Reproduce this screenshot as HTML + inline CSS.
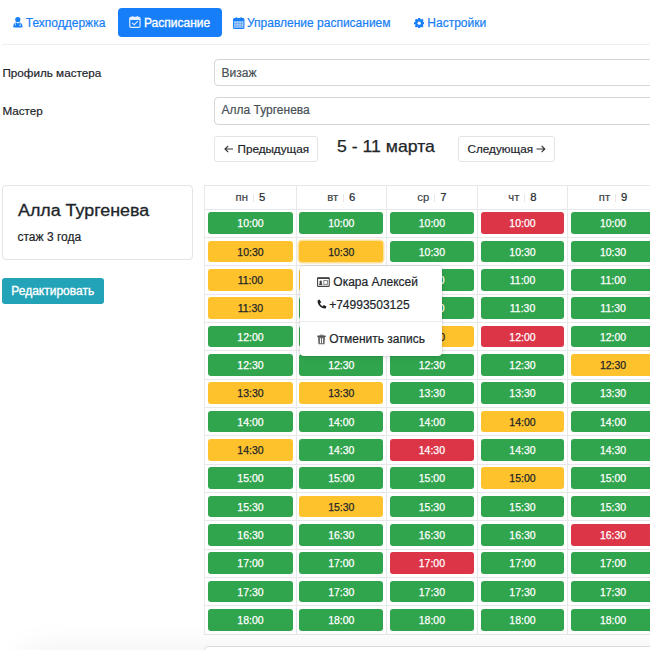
<!DOCTYPE html>
<html><head><meta charset="utf-8">
<style>
html,body{margin:0;padding:0;background:#fff;}
body{-webkit-text-stroke:0.2px currentColor;width:650px;height:650px;overflow:hidden;position:relative;font-family:"Liberation Sans",sans-serif;color:#212529;}
.a{position:absolute;white-space:nowrap;}
.t12{font-size:12px;line-height:14px;}
.nav{color:#167ef8;font-size:12px;line-height:14px;}
.pill{position:absolute;left:118px;top:8px;width:104px;height:28.5px;background:#167ef8;border-radius:4px;}
.hr{position:absolute;left:2px;top:44px;width:648px;height:1px;background:#eceeef;}
.inp{position:absolute;left:214px;width:460px;height:25px;border:1px solid #d3d7db;border-radius:4px;box-sizing:border-box;}
.btn{position:absolute;border:1px solid #e3e4e6;border-radius:3px;box-sizing:border-box;background:#fff;}
.card{position:absolute;left:2px;top:185px;width:191px;height:75px;border:1px solid #e3e3e3;border-radius:4px;box-sizing:border-box;}
.edit{position:absolute;left:2px;top:278px;width:101.6px;height:25.5px;background:#22a3b7;border-radius:3px;}
.vl{position:absolute;width:1px;background:#e6e8ea;}
.hl{position:absolute;height:1px;width:460px;background:#e6e8ea;}
.hd{position:absolute;display:flex;align-items:center;justify-content:center;}
.dw{font-size:11.3px;color:#3d4246;}
.sep{display:inline-block;width:1px;height:8px;background:#e6e8ea;margin:1px 5px 0 5px;}
.dn{font-size:11.3px;color:#212529;}
.slot{position:absolute;height:21.5px;border-radius:3px;font-size:10.5px;line-height:23.5px;text-align:center;color:#fff;-webkit-text-stroke:0.25px currentColor;}
.sg{background:#31a54d;}
.sy{background:#fec22d;color:#212529;}
.sr{background:#dc3548;}
.foc{box-shadow:0 0 0 1.5px #fde2a0;}
.pop{position:absolute;left:299.8px;top:265.8px;width:142.4px;height:90.2px;background:#fff;border-radius:4px;box-shadow:0 0 0 1px rgba(0,0,0,.06),0 2px 6px rgba(0,0,0,.10);}
.popline{position:absolute;left:0;top:55px;width:142px;height:1px;background:#ececec;}
.shade{position:absolute;left:25px;top:662px;width:800px;height:60px;border-radius:20px;background:#000;box-shadow:0 0 40px 6px rgba(0,0,0,.09);}
.bbox{position:absolute;left:204px;top:646px;width:460px;height:30px;border:1px solid #dcdcdc;border-radius:4px;box-sizing:border-box;background:#fff;}
</style></head><body>
<!-- nav -->
<svg class="a" style="left:13px;top:16.2px" width="11" height="12" viewBox="0 0 11 12"><circle cx="4.8" cy="3.5" r="2.6" fill="#167ef8"/><path d="M0.2 11.3 C0.2 8.2 1.6 6.6 3.2 6.3 L4.9 7.6 L6.6 6.3 C8.2 6.6 9.6 8.2 9.6 11.3 Q4.9 11.9 0.2 11.3Z" fill="#167ef8"/><path d="M2.4 6.6 V9.6 M7.2 6.6 V8.6" stroke="#cfe3fd" stroke-width="0.8" fill="none"/><circle cx="7.2" cy="9.4" r="0.8" fill="#cfe3fd"/></svg>
<div class="a nav" style="left:25.8px;top:16.2px">Техподдержка</div>
<div class="pill"></div>
<svg class="a" style="left:129px;top:16.1px" width="12" height="12" viewBox="0 0 12 12"><rect x="0.75" y="1.4" width="10.3" height="10" rx="1.3" fill="none" stroke="#e3eeff" stroke-width="1.2"/><rect x="0.75" y="1.4" width="10.3" height="2.6" rx="1" fill="#e3eeff"/><rect x="2.5" y="0.2" width="2" height="2.6" rx="0.9" fill="#e3eeff"/><rect x="7.3" y="0.2" width="2" height="2.6" rx="0.9" fill="#e3eeff"/><path d="M3.1 6.9 L5.2 8.8 L8.8 5.2" fill="none" stroke="#e3eeff" stroke-width="1.15"/></svg>
<div class="a nav" style="left:144px;top:16.2px;color:#fff;-webkit-text-stroke:0.35px #fff">Расписание</div>
<svg class="a" style="left:233px;top:16.5px" width="12" height="12" viewBox="0 0 12 12"><rect x="0.6" y="4" width="10.3" height="7.4" fill="#b9d7fc"/><rect x="0.6" y="1.5" width="10.3" height="9.9" rx="1" fill="none" stroke="#167ef8" stroke-width="1.1"/><rect x="0.6" y="1.5" width="10.3" height="2.7" rx="0.8" fill="#167ef8"/><rect x="2.4" y="0.2" width="1.9" height="2.5" rx="0.8" fill="#167ef8"/><rect x="7.2" y="0.2" width="1.9" height="2.5" rx="0.8" fill="#167ef8"/><path d="M3.1 4 V11.3 M5.75 4 V11.3 M8.3 4 V11.3 M0.6 6.6 H10.9 M0.6 9 H10.9" stroke="#5a9ff5" stroke-width="0.7"/></svg>
<div class="a nav" style="left:247px;top:16.2px">Управление расписанием</div>
<svg class="a" style="left:414px;top:17.5px" width="10.4" height="10.4" viewBox="0 0 10 10"><g fill="#167ef8"><circle cx="5" cy="5" r="3.7"/><path d="M4 0 H6 L6.3 2 H3.7Z M4 10 H6 L6.3 8 H3.7Z M0 4 V6 L2 6.3 V3.7Z M10 4 V6 L8 6.3 V3.7Z"/><path d="M4 0 H6 L6.3 2 H3.7Z M4 10 H6 L6.3 8 H3.7Z M0 4 V6 L2 6.3 V3.7Z M10 4 V6 L8 6.3 V3.7Z" transform="rotate(45 5 5)"/></g><circle cx="5" cy="5" r="1.6" fill="#fff"/></svg>
<div class="a nav" style="left:427.3px;top:16.2px">Настройки</div>
<div class="hr"></div>

<!-- form -->
<div class="a t12" style="left:2.4px;top:66.1px;font-size:11.7px">Профиль мастера</div>
<div class="a t12" style="left:2.4px;top:103.6px;font-size:11.7px">Мастер</div>
<div class="inp" style="top:59px;height:27px"></div>
<div class="a t12" style="left:221.5px;top:65.6px;color:#495057">Визаж</div>
<div class="inp" style="top:97px;height:28px"></div>
<div class="a t12" style="left:221.5px;top:103.3px;color:#495057">Алла Тургенева</div>

<div class="btn" style="left:214px;top:136px;width:104px;height:26px"></div>
<svg class="a" style="left:224px;top:145px" width="10" height="8" viewBox="0 0 10 8"><path d="M9 4 H1.2 M4.2 0.9 L1 4 L4.2 7.1" fill="none" stroke="#333" stroke-width="1.15"/></svg>
<div class="a t12" style="left:237.5px;top:141.8px;font-size:11.7px">Предыдущая</div>
<div class="a" style="left:337.3px;top:136px;font-size:16.5px;line-height:20px;-webkit-text-stroke:0.25px currentColor;transform:scaleX(1.07);transform-origin:0 0">5 - 11 марта</div>
<div class="btn" style="left:458px;top:136px;width:97px;height:26px"></div>
<div class="a t12" style="left:467.6px;top:141.8px;font-size:11.7px">Следующая</div>
<svg class="a" style="left:536px;top:145px" width="10" height="8" viewBox="0 0 10 8"><path d="M0.5 4 H8.6 M5.6 0.9 L8.8 4 L5.6 7.1" fill="none" stroke="#333" stroke-width="1.15"/></svg>

<!-- card -->
<div class="card"></div>
<div class="a" style="left:17.6px;top:200.5px;font-size:16px;line-height:20px;-webkit-text-stroke:0.3px currentColor;transform:scaleX(1.115);transform-origin:0 0">Алла Тургенева</div>
<div class="a t12" style="left:17.5px;top:229.5px">стаж 3 года</div>
<div class="edit"></div>
<div class="a t12" style="left:11.3px;top:283.5px;color:#fff;-webkit-text-stroke:0.35px #fff">Редактировать</div>

<!-- table -->
<div class="vl" style="left:204.40px;top:185.00px;height:449.69px"></div>
<div class="vl" style="left:295.50px;top:185.00px;height:449.69px"></div>
<div class="vl" style="left:386.10px;top:185.00px;height:449.69px"></div>
<div class="vl" style="left:476.70px;top:185.00px;height:449.69px"></div>
<div class="vl" style="left:567.30px;top:185.00px;height:449.69px"></div>
<div class="vl" style="left:657.90px;top:185.00px;height:449.69px"></div>
<div class="hl" style="top:185.00px;left:204.40px"></div>
<div class="hl" style="top:208.70px;left:204.40px"></div>
<div class="hl" style="top:237.03px;left:204.40px"></div>
<div class="hl" style="top:265.37px;left:204.40px"></div>
<div class="hl" style="top:293.70px;left:204.40px"></div>
<div class="hl" style="top:322.03px;left:204.40px"></div>
<div class="hl" style="top:350.37px;left:204.40px"></div>
<div class="hl" style="top:378.70px;left:204.40px"></div>
<div class="hl" style="top:407.03px;left:204.40px"></div>
<div class="hl" style="top:435.36px;left:204.40px"></div>
<div class="hl" style="top:463.70px;left:204.40px"></div>
<div class="hl" style="top:492.03px;left:204.40px"></div>
<div class="hl" style="top:520.36px;left:204.40px"></div>
<div class="hl" style="top:548.70px;left:204.40px"></div>
<div class="hl" style="top:577.03px;left:204.40px"></div>
<div class="hl" style="top:605.36px;left:204.40px"></div>
<div class="hl" style="top:633.69px;left:204.40px"></div>
<div class="hd" style="left:204.90px;width:91.10px;top:185.50px;height:23.70px"><span class="dw">пн</span><span class="sep"></span><span class="dn">5</span></div>
<div class="hd" style="left:296.00px;width:90.60px;top:185.50px;height:23.70px"><span class="dw">вт</span><span class="sep"></span><span class="dn">6</span></div>
<div class="hd" style="left:386.60px;width:90.60px;top:185.50px;height:23.70px"><span class="dw">ср</span><span class="sep"></span><span class="dn">7</span></div>
<div class="hd" style="left:477.20px;width:90.60px;top:185.50px;height:23.70px"><span class="dw">чт</span><span class="sep"></span><span class="dn">8</span></div>
<div class="hd" style="left:567.80px;width:90.60px;top:185.50px;height:23.70px"><span class="dw">пт</span><span class="sep"></span><span class="dn">9</span></div>
<div class="slot sg" style="left:208.30px;top:212.40px;width:84.30px">10:00</div>
<div class="slot sg" style="left:299.40px;top:212.40px;width:83.80px">10:00</div>
<div class="slot sg" style="left:390.00px;top:212.40px;width:83.80px">10:00</div>
<div class="slot sr" style="left:480.60px;top:212.40px;width:83.80px">10:00</div>
<div class="slot sg" style="left:571.20px;top:212.40px;width:83.80px">10:00</div>
<div class="slot sy" style="left:208.30px;top:240.73px;width:84.30px">10:30</div>
<div class="slot sy foc" style="left:299.40px;top:240.73px;width:83.80px">10:30</div>
<div class="slot sg" style="left:390.00px;top:240.73px;width:83.80px">10:30</div>
<div class="slot sg" style="left:480.60px;top:240.73px;width:83.80px">10:30</div>
<div class="slot sg" style="left:571.20px;top:240.73px;width:83.80px">10:30</div>
<div class="slot sy" style="left:208.30px;top:269.07px;width:84.30px">11:00</div>
<div class="slot sy" style="left:299.40px;top:269.07px;width:83.80px">11:00</div>
<div class="slot sg" style="left:390.00px;top:269.07px;width:83.80px">11:00</div>
<div class="slot sg" style="left:480.60px;top:269.07px;width:83.80px">11:00</div>
<div class="slot sg" style="left:571.20px;top:269.07px;width:83.80px">11:00</div>
<div class="slot sy" style="left:208.30px;top:297.40px;width:84.30px">11:30</div>
<div class="slot sg" style="left:299.40px;top:297.40px;width:83.80px">11:30</div>
<div class="slot sg" style="left:390.00px;top:297.40px;width:83.80px">11:30</div>
<div class="slot sg" style="left:480.60px;top:297.40px;width:83.80px">11:30</div>
<div class="slot sg" style="left:571.20px;top:297.40px;width:83.80px">11:30</div>
<div class="slot sg" style="left:208.30px;top:325.73px;width:84.30px">12:00</div>
<div class="slot sg" style="left:299.40px;top:325.73px;width:83.80px">12:00</div>
<div class="slot sy" style="left:390.00px;top:325.73px;width:83.80px">12:00</div>
<div class="slot sr" style="left:480.60px;top:325.73px;width:83.80px">12:00</div>
<div class="slot sg" style="left:571.20px;top:325.73px;width:83.80px">12:00</div>
<div class="slot sg" style="left:208.30px;top:354.06px;width:84.30px">12:30</div>
<div class="slot sg" style="left:299.40px;top:354.06px;width:83.80px">12:30</div>
<div class="slot sg" style="left:390.00px;top:354.06px;width:83.80px">12:30</div>
<div class="slot sg" style="left:480.60px;top:354.06px;width:83.80px">12:30</div>
<div class="slot sy" style="left:571.20px;top:354.06px;width:83.80px">12:30</div>
<div class="slot sy" style="left:208.30px;top:382.40px;width:84.30px">13:30</div>
<div class="slot sy" style="left:299.40px;top:382.40px;width:83.80px">13:30</div>
<div class="slot sg" style="left:390.00px;top:382.40px;width:83.80px">13:30</div>
<div class="slot sg" style="left:480.60px;top:382.40px;width:83.80px">13:30</div>
<div class="slot sg" style="left:571.20px;top:382.40px;width:83.80px">13:30</div>
<div class="slot sg" style="left:208.30px;top:410.73px;width:84.30px">14:00</div>
<div class="slot sg" style="left:299.40px;top:410.73px;width:83.80px">14:00</div>
<div class="slot sg" style="left:390.00px;top:410.73px;width:83.80px">14:00</div>
<div class="slot sy" style="left:480.60px;top:410.73px;width:83.80px">14:00</div>
<div class="slot sg" style="left:571.20px;top:410.73px;width:83.80px">14:00</div>
<div class="slot sy" style="left:208.30px;top:439.06px;width:84.30px">14:30</div>
<div class="slot sg" style="left:299.40px;top:439.06px;width:83.80px">14:30</div>
<div class="slot sr" style="left:390.00px;top:439.06px;width:83.80px">14:30</div>
<div class="slot sg" style="left:480.60px;top:439.06px;width:83.80px">14:30</div>
<div class="slot sg" style="left:571.20px;top:439.06px;width:83.80px">14:30</div>
<div class="slot sg" style="left:208.30px;top:467.40px;width:84.30px">15:00</div>
<div class="slot sg" style="left:299.40px;top:467.40px;width:83.80px">15:00</div>
<div class="slot sg" style="left:390.00px;top:467.40px;width:83.80px">15:00</div>
<div class="slot sy" style="left:480.60px;top:467.40px;width:83.80px">15:00</div>
<div class="slot sg" style="left:571.20px;top:467.40px;width:83.80px">15:00</div>
<div class="slot sg" style="left:208.30px;top:495.73px;width:84.30px">15:30</div>
<div class="slot sy" style="left:299.40px;top:495.73px;width:83.80px">15:30</div>
<div class="slot sg" style="left:390.00px;top:495.73px;width:83.80px">15:30</div>
<div class="slot sg" style="left:480.60px;top:495.73px;width:83.80px">15:30</div>
<div class="slot sg" style="left:571.20px;top:495.73px;width:83.80px">15:30</div>
<div class="slot sg" style="left:208.30px;top:524.06px;width:84.30px">16:30</div>
<div class="slot sg" style="left:299.40px;top:524.06px;width:83.80px">16:30</div>
<div class="slot sg" style="left:390.00px;top:524.06px;width:83.80px">16:30</div>
<div class="slot sg" style="left:480.60px;top:524.06px;width:83.80px">16:30</div>
<div class="slot sr" style="left:571.20px;top:524.06px;width:83.80px">16:30</div>
<div class="slot sg" style="left:208.30px;top:552.40px;width:84.30px">17:00</div>
<div class="slot sg" style="left:299.40px;top:552.40px;width:83.80px">17:00</div>
<div class="slot sr" style="left:390.00px;top:552.40px;width:83.80px">17:00</div>
<div class="slot sg" style="left:480.60px;top:552.40px;width:83.80px">17:00</div>
<div class="slot sg" style="left:571.20px;top:552.40px;width:83.80px">17:00</div>
<div class="slot sg" style="left:208.30px;top:580.73px;width:84.30px">17:30</div>
<div class="slot sg" style="left:299.40px;top:580.73px;width:83.80px">17:30</div>
<div class="slot sg" style="left:390.00px;top:580.73px;width:83.80px">17:30</div>
<div class="slot sg" style="left:480.60px;top:580.73px;width:83.80px">17:30</div>
<div class="slot sg" style="left:571.20px;top:580.73px;width:83.80px">17:30</div>
<div class="slot sg" style="left:208.30px;top:609.06px;width:84.30px">18:00</div>
<div class="slot sg" style="left:299.40px;top:609.06px;width:83.80px">18:00</div>
<div class="slot sg" style="left:390.00px;top:609.06px;width:83.80px">18:00</div>
<div class="slot sg" style="left:480.60px;top:609.06px;width:83.80px">18:00</div>
<div class="slot sg" style="left:571.20px;top:609.06px;width:83.80px">18:00</div>

<!-- popover -->
<div class="pop">
<div class="popline"></div>
</div>
<svg class="a" style="left:317px;top:276.8px" width="13" height="10" viewBox="0 0 13 10"><rect x="0.55" y="0.8" width="11.7" height="8.6" rx="0.6" fill="none" stroke="#444" stroke-width="1.1"/><rect x="0.55" y="0.5" width="11.7" height="1.5" fill="#444"/><path d="M2 8 L2.8 5.6 C2.2 5.2 2.3 3.4 3.7 3.4 C5.1 3.4 5.2 5.2 4.6 5.6 L5.4 8Z" fill="#444"/><rect x="6.8" y="3.6" width="3.6" height="3.8" fill="none" stroke="#777" stroke-width="0.9"/></svg>
<div class="a t12" style="left:333.3px;top:274.5px">Окара Алексей</div>
<svg class="a" style="left:316.8px;top:298.8px" width="10" height="10" viewBox="0 0 10 10"><path d="M0.6 1.6 L2.6 0.5 L4.2 3.3 L2.9 4.4 C3.6 5.9 4.4 6.6 5.7 7.2 L6.8 5.9 L9.5 7.4 L8.6 9.4 C4.2 9.8 0.2 5.9 0.6 1.6Z" fill="#222"/></svg>
<div class="a t12" style="left:329.2px;top:297.5px">+74993503125</div>
<svg class="a" style="left:317px;top:333.6px" width="9" height="11" viewBox="0 0 9 11"><path d="M2.8 2 C2.8 0.6 6.2 0.6 6.2 2" fill="none" stroke="#666" stroke-width="1"/><rect x="0.2" y="1.6" width="8.6" height="1.3" rx="0.4" fill="#555"/><path d="M0.9 3 L1.4 10.2 H7.6 L8.1 3Z" fill="#6e6e6e"/><rect x="3" y="4.2" width="1" height="5" fill="#fff"/><rect x="5" y="4.2" width="1" height="5" fill="#fff"/></svg>
<div class="a t12" style="left:329.2px;top:332px">Отменить запись</div>

<div class="shade"></div>
<div class="bbox"></div>
</body></html>
